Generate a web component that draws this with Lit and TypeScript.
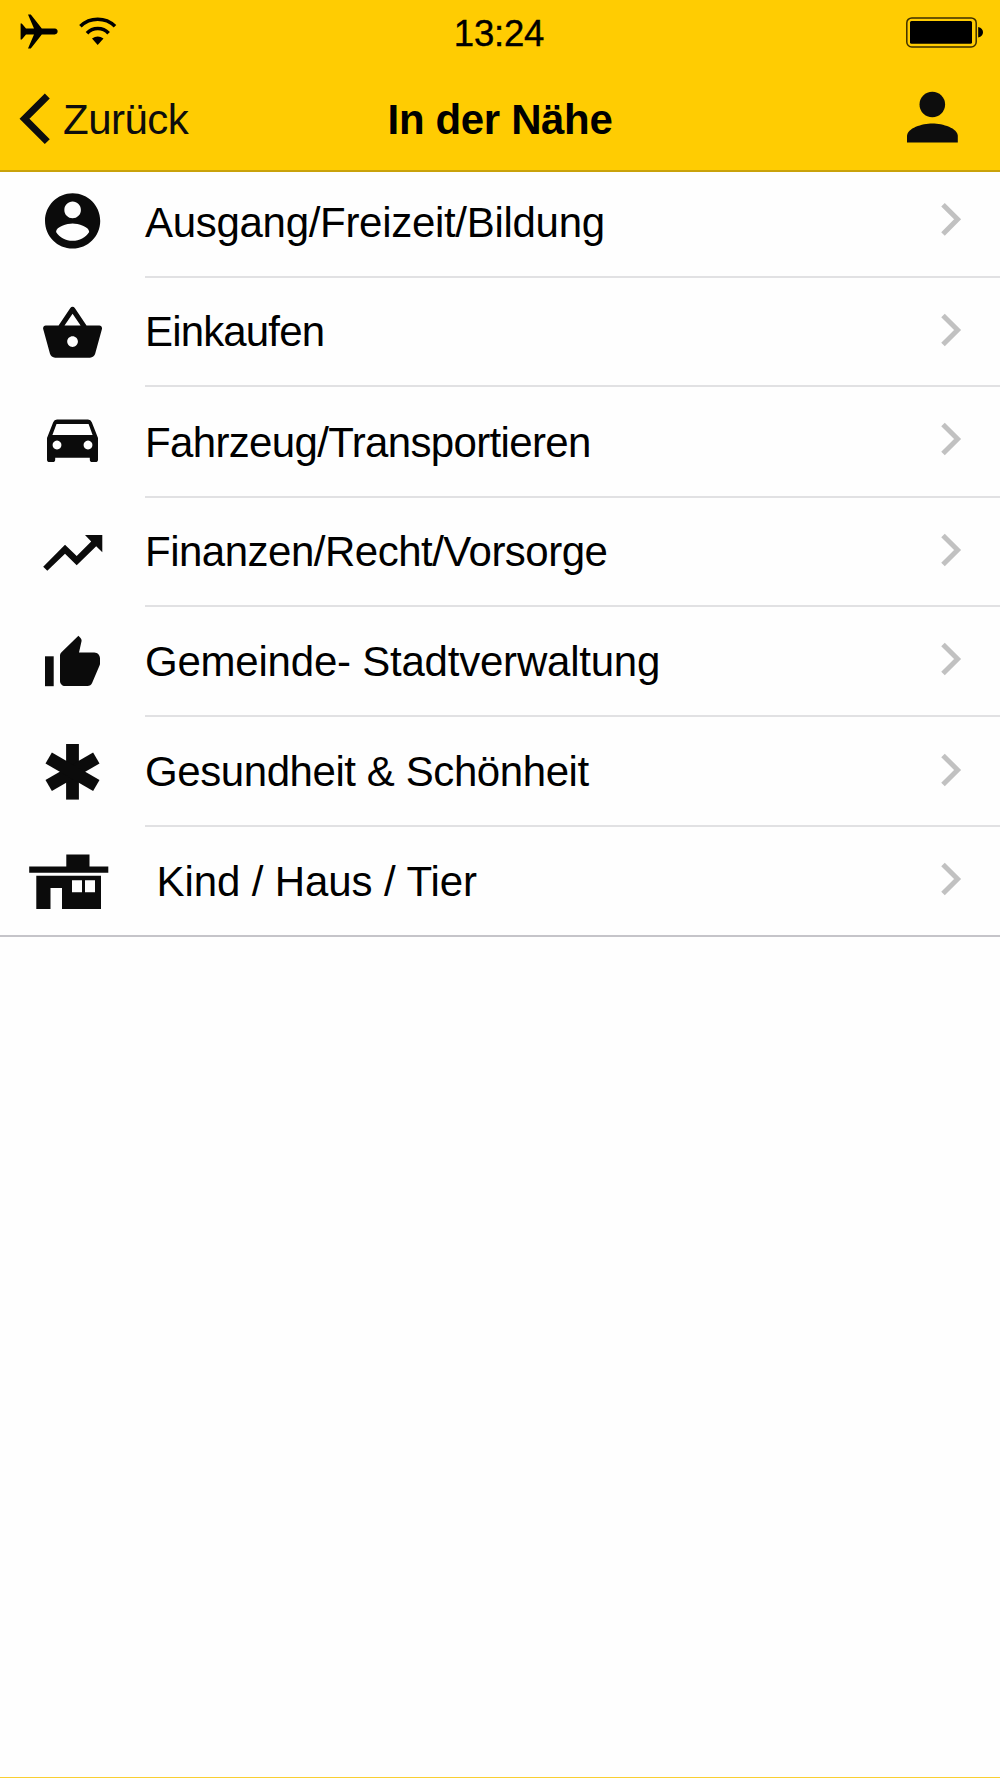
import { LitElement, html, svg, css } from "lit";
import { customElement } from "lit/decorators.js";

interface Category {
  label: string;
  height: number;
  arrow: number;
  spacing: number;
  indent?: number;
  icon: unknown;
}

const CATEGORIES: Category[] = [
  {
    label: "Ausgang/Freizeit/Bildung",
    height: 106,
    arrow: 49.3,
    spacing: -0.3,
    icon: svg`<path transform="translate(39.5 15.8) scale(2.76)" d="M12 2C6.48 2 2 6.48 2 12s4.48 10 10 10 10-4.48 10-10S17.52 2 12 2zm0 3c1.66 0 3 1.34 3 3s-1.34 3-3 3-3-1.34-3-3 1.34-3 3-3zm0 14.2c-2.5 0-4.71-1.28-6-3.22.03-1.99 4-3.08 6-3.08 1.99 0 5.97 1.09 6 3.08-1.29 1.94-3.5 3.22-6 3.22z"/>`,
  },
  {
    label: "Einkaufen",
    height: 109,
    arrow: 51,
    spacing: -0.85,
    icon: svg`<path transform="translate(40.4 20.4) scale(2.68)" d="M17.21 9l-4.38-6.56c-.19-.28-.51-.42-.83-.42-.32 0-.64.14-.83.43L6.79 9H2c-.55 0-1 .45-1 1 0 .09.01.18.04.27l2.54 9.27c.23.84 1 1.46 1.92 1.46h13c.92 0 1.69-.62 1.93-1.46l2.54-9.27L23 10c0-.55-.45-1-1-1h-4.79zM9 9l3-4.4L15 9H9zm3 8c-1.1 0-2-.9-2-2s.9-2 2-2 2 .9 2 2-.9 2-2 2z"/>`,
  },
  {
    label: "Fahrzeug/Transportieren",
    height: 111,
    arrow: 49,
    spacing: -0.65,
    icon: svg`<path fill-rule="evenodd" d="M47 46L53.2 30.2Q54.2 27.5 57 27.5H88Q90.8 27.5 91.8 30.2L98 46V67.5q0 2.6-2.6 2.6h-3q-2.6 0-2.6-2.6V65.7H55.2v1.8q0 2.6-2.6 2.6h-3q-2.6 0-2.6-2.6zM56.5 31.9L52.4 43.1H92.6L88.6 31.9zM57 48.6a4.4 4.4 0 1 0 .01 0zM88 48.6a4.4 4.4 0 1 0 .01 0z"/>`,
  },
  {
    label: "Finanzen/Recht/Vorsorge",
    height: 109,
    arrow: 51,
    spacing: -0.5,
    icon: svg`<path d="M43.2 65.8L65 43.8 76.7 55 91.2 40.4 85 34H102.3V51.3L96.2 45.2 76.7 64.3 65 52.8 47.3 69.8z"/>`,
  },
  {
    label: "Gemeinde- Stadtverwaltung",
    height: 110,
    arrow: 50,
    spacing: -0.22,
    icon: svg`<path d="M45 45.3h8.7v29.9H45z"/><path transform="translate(42.5 22.2) scale(2.5 2.52)" d="M23 10c0-1.1-.9-2.3-2.3-2.3h-6.1l1.05-4.7c0-.41-.17-.79-.44-1.06L14.37 1 7.59 7.59C7.22 7.95 7 8.45 7 9v10c0 1.1.9 2 2 2h9c.83 0 1.54-.5 1.84-1.22l3.02-7.05c.09-.23.14-.47.14-.73z"/>`,
  },
  {
    label: "Gesundheit & Schönheit",
    height: 110,
    arrow: 51,
    spacing: -0.42,
    icon: svg`<g transform="translate(72.5 50.8)"><path d="M-6.4-27.8H6.4V27.8H-6.4z"/><path transform="rotate(60)" d="M-6.4-27.5H6.4V27.5H-6.4z"/><path transform="rotate(-60)" d="M-6.4-27.5H6.4V27.5H-6.4z"/></g>`,
  },
  {
    label: "Kind / Haus / Tier",
    height: 110,
    arrow: 50,
    spacing: -0.1,
    indent: 11.5,
    icon: svg`<path fill-rule="evenodd" d="M66.3 23.6H89.5V35.5H108.3V41.8H29.2V35.5H66.3zM36.3 44.7H101V78H62V57H50.5V78H36.3zM72 49.3V61.3H82V49.3zM85 49.3V61.3H95V49.3z"/>`,
  },
];

@customElement("app-root")
export class AppRoot extends LitElement {
  static styles = css`
    :host {
      display: flex;
      flex-direction: column;
      box-sizing: border-box;
      width: 1000px;
      height: 1778px;
      background: #fefefe;
      border-bottom: 1px solid #f9cf32;
      color: #000;
      font-family: "Liberation Sans", Arial, sans-serif;
      font-size: 42px;
      overflow: hidden;
    }
    svg {
      display: block;
      flex: none;
    }
    .header {
      height: 172px;
      box-sizing: border-box;
      background: #ffcc02;
      border-bottom: 2px solid #c9a20a;
    }
    .status,
    .nav {
      display: grid;
      grid-template-columns: 1fr auto 1fr;
    }
    .status {
      height: 64px;
    }
    .nav {
      height: 106px;
    }
    .end {
      justify-self: end;
    }
    .time {
      padding: 13px 2px 0 0;
      font-size: 36.5px;
      line-height: 42px;
      letter-spacing: -0.2px;
      -webkit-text-stroke: 0.4px #000;
    }
    .title {
      padding-top: 32px;
      line-height: 48px;
      font-weight: 700;
      letter-spacing: -0.35px;
    }
    .back {
      display: flex;
      color: #0d0d0d;
    }
    .back-label {
      padding-top: 32px;
      line-height: 48px;
      letter-spacing: -0.5px;
    }
    .row {
      display: flex;
      align-items: flex-end;
    }
    .content {
      display: flex;
      flex: 1;
      height: 100%;
      box-sizing: border-box;
      align-items: flex-end;
      justify-content: space-between;
      border-bottom: 2px solid #e1e1e3;
    }
    .row:last-child {
      border-bottom: 2px solid #c5c4c9;
      box-sizing: border-box;
    }
    .row:last-child .content {
      border-bottom: 0;
    }
    .label {
      padding-bottom: 29px;
      line-height: 48px;
      white-space: pre;
    }
    .icon {
      fill: #0b0b0b;
    }
    .row:last-child .icon {
      margin-bottom: -2px;
    }
    .arrow {
      fill: none;
      stroke: #c1c1c1;
      stroke-width: 5;
    }
  `;

  private renderRow(item: Category) {
    return html`
      <div class="row" style="height:${item.height}px">
        <svg class="icon" width="145" height="106">${item.icon}</svg>
        <div class="content">
          <span class="label" style="letter-spacing:${item.spacing}px;padding-left:${item.indent ?? 0}px">${item.label}</span>
          <svg class="arrow" width="64" height="104" viewBox="0 2 64 104">
            <path transform="translate(0 ${item.arrow})" d="M7-14.6L21.6 0 7 14.6" />
          </svg>
        </div>
      </div>
    `;
  }

  render() {
    return html`
      <div class="header">
        <div class="status">
          <svg width="130" height="64">
            <path d="M20.6 23.6h1.2l4.2 5h8L28 14.4h2.8L41.8 28.6h13c3.8 0 3.8 5.8 0 5.8h-13L30.8 48.6H28L34 34.4h-8l-4.2 5h-1.2z" />
            <g fill="none" stroke="#000" stroke-width="3.6">
              <path d="M80.4 26.2A24.9 24.9 0 0 1 115 26.2" />
              <path d="M87 33.3A14.7 14.7 0 0 1 108.6 33.3" />
            </g>
            <path d="M92 38.5Q97.7 34.5 103.5 38.5L97.7 45z" />
          </svg>
          <span class="time">13:24</span>
          <svg class="end" width="100" height="64" viewBox="900 0 100 64">
            <rect x="906.8" y="17.9" width="69.4" height="29" rx="5" fill="none" stroke="#3d2e00" stroke-width="1.5" />
            <rect x="910" y="21" width="62" height="22.8" rx="1.5" />
            <path d="M978.2 27c6.4 1.2 6.4 9.4 0 10.6z" />
          </svg>
        </div>
        <div class="nav">
          <div class="back">
            <svg width="63" height="106" viewBox="0 64 63 106">
              <path d="M47.3 96L24.5 118.8 47.3 141.6" fill="none" stroke="#0d0d0d" stroke-width="7" />
            </svg>
            <span class="back-label">Zurück</span>
          </div>
          <span class="title">In der Nähe</span>
          <svg class="end" width="100" height="106" viewBox="900 64 100 106" fill="#0d0d0d">
            <circle cx="932.3" cy="104.5" r="12.8" />
            <path d="M907 142.6V136C907 128 922 123.4 932.4 123.4S957.8 128 957.8 136V142.6z" />
          </svg>
        </div>
      </div>
      <div class="list">${CATEGORIES.map((item) => this.renderRow(item))}</div>
    `;
  }
}
